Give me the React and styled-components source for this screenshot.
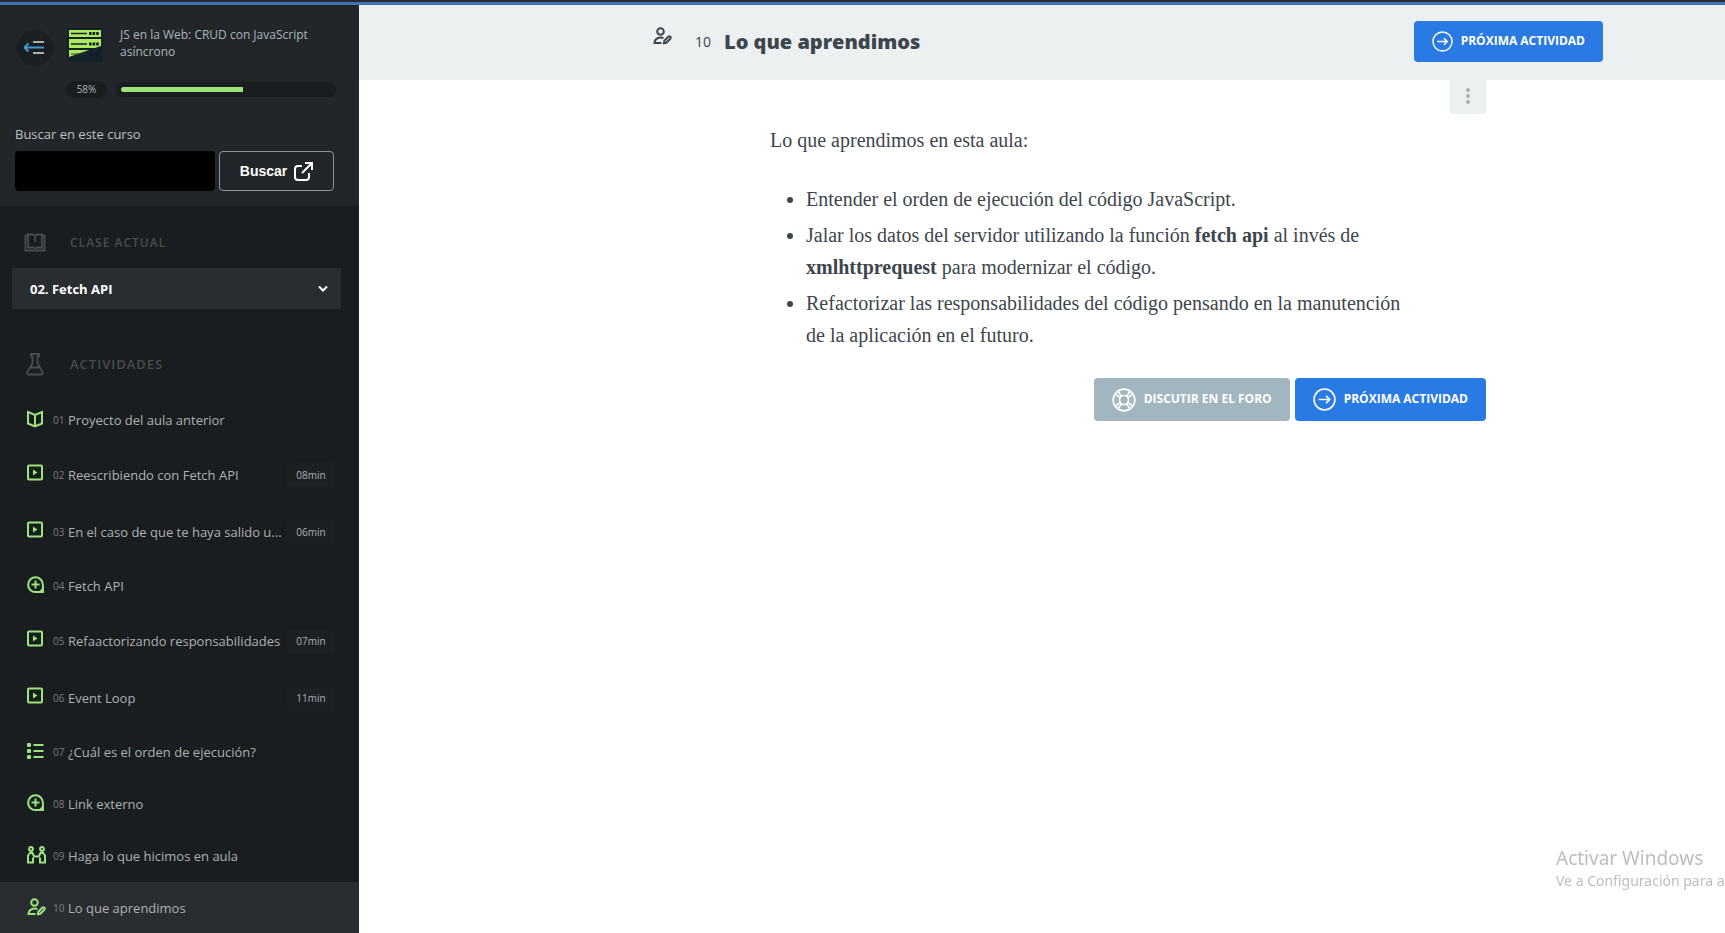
import React from "react";
import styled, { createGlobalStyle } from "styled-components";

const GlobalStyle = createGlobalStyle`
  *, *::before, *::after { box-sizing: border-box; }
  html, body { margin: 0; }
  body {
    background: #ffffff;
    color: #3d464d;
    font-family: "Open Sans", "Noto Sans", sans-serif;
    font-size: 13px;
  }
  button, input, select { font-family: inherit; }
`;

const Page = styled.div`
  display: flex;
  flex-direction: column;
  height: 100vh;
  overflow: hidden;
`;

const TopStrip = styled.div`
  flex: none;
  height: 5px;
  background: #4072b5;
  border-top: 2px solid #262b2f;
`;

const Columns = styled.div`
  display: flex;
  flex: 1;
  min-height: 0;
`;

/* Sidebar */

const Sidebar = styled.aside`
  flex: none;
  width: 359px;
  overflow: hidden;
  background: #191d1f;
`;

const CourseHeader = styled.header`
  height: 201px;
  padding: 20px 23px 0 15px;
  background: #22262a;
`;

const CourseTop = styled.div`
  display: flex;
  align-items: flex-start;
`;

const CollapseButton = styled.button`
  display: grid;
  place-items: center;
  width: 36px;
  height: 36px;
  margin: 5px 14px 0 2px;
  padding: 0;
  border: 0;
  border-radius: 50%;
  background: #1b1f22;
`;

const CourseName = styled.a`
  margin-left: 17px;
  color: #a9b6bb;
  font-size: 12px;
  line-height: 17px;
  text-decoration: none;
  max-width: 210px;
  padding-top: 1px;
`;

const LogoBox = styled.span`
  display: block;
  height: 34px;
  margin-top: 3px;
`;

const ProgressRow = styled.div`
  display: flex;
  align-items: center;
  gap: 9px;
  margin: 15px 0 0 51px;
`;

const Percent = styled.span`
  width: 41px;
  border-radius: 9px;
  background: #191d1f;
  color: #a9b6bb;
  font-size: 10px;
  line-height: 17px;
  text-align: center;
`;

const Track = styled.div`
  flex: 1;
  height: 15px;
  padding: 5px;
  border-radius: 8px;
  background: #191d1f;
`;

const Fill = styled.div`
  height: 5px;
  border-radius: 3px 0 0 3px;
  background: #9be37d;
`;

const SearchForm = styled.form`
  margin-top: 26px;
`;

const SearchLabel = styled.label`
  display: block;
  color: #bcc0c2;
  font-size: 13px;
  line-height: 20px;
`;

const SearchRow = styled.div`
  display: flex;
  gap: 4px;
  margin-top: 7px;
`;

const SearchInput = styled.input`
  width: 200px;
  height: 40px;
  padding: 0 12px;
  border: 0;
  border-radius: 4px;
  background: #000000;
  color: #ffffff;
  font-size: 14px;
`;

const SearchButton = styled.button`
  display: flex;
  align-items: center;
  justify-content: center;
  gap: 7px;
  width: 115px;
  height: 40px;
  padding: 0;
  border: 1px solid #909497;
  border-radius: 4px;
  background: transparent;
  color: #ffffff;
  font-family: "Liberation Sans", Arial, sans-serif;
  font-size: 14px;
  font-weight: 700;
`;

const SectionTitle = styled.h2`
  display: flex;
  align-items: center;
  height: 24px;
  margin: 0;
  padding-left: 24px;
  gap: 24px;
  color: #484d50;
  font-size: ${(p) => (p.$small ? 12 : 13)}px;
  font-weight: 600;
  letter-spacing: 1px;
`;

const ClassSection = styled.section`
  padding-top: 24px;
`;

const ActivitiesSection = styled.section`
  padding-top: 43px;
`;

const SelectWrap = styled.div`
  display: grid;
  align-items: center;
  margin: 14px 18px 0 12px;

  > * { grid-area: 1 / 1; }
  > svg { justify-self: end; margin-right: 11px; pointer-events: none; }
`;

const ClassSelect = styled.select`
  width: 100%;
  height: 41px;
  padding: 0 18px;
  appearance: none;
  border: 0;
  border-radius: 0;
  background: #292d30;
  color: #ffffff;
  font-size: 13px;
  font-weight: 700;
`;

const ActivityList = styled.ol`
  margin: 18px 0 0;
  padding: 0;
  list-style: none;
`;

const Activity = styled.li`
  background: ${(p) => (p.$active ? "#292d30" : "transparent")};
`;

const ActivityLink = styled.a`
  display: flex;
  align-items: center;
  height: ${(p) => (p.$timed ? 57 : 52)}px;
  padding: 0 24px 0 27px;
  color: #adb1b3;
  font-size: 13px;
  text-decoration: none;
`;

const ActivityIcon = styled.span`
  display: flex;
  width: 26px;
  padding-bottom: 3px;
`;

const Order = styled.span`
  width: 15px;
  color: #797e80;
  font-size: 10px;
`;

const ActivityName = styled.span`
  white-space: nowrap;
`;

const Duration = styled.span`
  width: 48px;
  margin-left: auto;
  border-radius: 2px;
  background: #1c2023;
  font-size: 10px;
  line-height: 24px;
  text-align: center;
`;

/* Main area */

const Main = styled.main`
  flex: 1;
  min-width: 0;
`;

const TitleBar = styled.header`
  height: 75px;
  padding-left: 172px;
  background: #ecf0f1;
`;

const TitleInner = styled.div`
  display: flex;
  align-items: center;
  max-width: 950px;
  margin: 0 auto;
  padding-top: 16px;
`;

const TitleIcon = styled.span`
  display: flex;
  margin: 0 23px 11px 0;
`;

const TitleNumber = styled.span`
  width: 29px;
  font-size: 14px;
`;

const Title = styled.h1`
  margin: 0;
  font-size: 20px;
  font-weight: 800;
  line-height: 40px;
`;

const ActionLink = styled.a`
  display: flex;
  align-items: center;
  gap: 8px;
  height: ${(p) => (p.$tall ? 43 : 41)}px;
  padding: 0 18px;
  border-radius: 4px;
  background: ${(p) => (p.$muted ? "#a2b6bf" : "#2a7ae4")};
  color: #ffffff;
  font-size: 12px;
  font-weight: 700;
  line-height: 16px;
  text-decoration: none;
  white-space: nowrap;
`;

const ActionText = styled.span`
  padding-bottom: 2px;
`;

const TitleAction = styled.div`
  margin-left: auto;
`;

const ContentArea = styled.div`
  padding-left: 172px;
`;

const Content = styled.article`
  max-width: 716px;
  margin: 0 auto;
  color: #3d464d;
  font-family: "Source Serif Pro", "Liberation Serif", serif;
  font-size: 20px;
  line-height: 32px;
`;

const MoreButton = styled.button`
  display: grid;
  place-items: center;
  width: 36px;
  height: 34px;
  margin-left: auto;
  padding: 0;
  border: 0;
  border-radius: 0 0 3px 3px;
  background: #ecf0f1;
`;

const Intro = styled.p`
  margin: 10px 0 27px;
`;

const Lessons = styled.ul`
  margin: 0;
  padding: 0 80px 0 36px;

  li + li { margin-top: 4px; }
`;

const Actions = styled.div`
  display: flex;
  justify-content: flex-end;
  gap: 5px;
  margin-top: 27px;
  font-family: "Open Sans", "Noto Sans", sans-serif;
`;

const Watermark = styled.div`
  position: fixed;
  right: 0;
  bottom: 41px;
  width: 169px;
  overflow: hidden;
  color: #bdbdbd;
  font-family: "Noto Sans", "Open Sans", sans-serif;
  white-space: nowrap;
  pointer-events: none;
`;

const WatermarkTitle = styled.div`
  font-size: 19px;
  line-height: 24px;
`;

const WatermarkText = styled.div`
  font-size: 14px;
  line-height: 22px;
`;

/* Icons */

const GREEN = "#9be37d";

const CollapseIcon = () => (
  <svg width="22" height="16" viewBox="0 0 22 16" fill="none" strokeWidth="2">
    <path d="M9 2h11M9 13h11" stroke="#a9b0b4" />
    <path d="M1 7.500h19M4.500 3.500l-4 4 4 4" stroke="#3f97cf" />
  </svg>
);

const CourseLogo = () => (
  <svg width="36" height="34" viewBox="0 0 36 34">
    <rect x="0" y="0" width="36" height="34" rx="2" fill="#14202b" />
    <path d="M2 2h32v7H2zM2 11h32v7L28 20H2zM2 22h20L2 29z" fill="#aee85c" />
    <path d="M4 5.500h16M4 16h16" stroke="#14202b" strokeWidth="1.500" />
    <path d="M4 26h16" stroke="#26331f" />
    <path d="M22 5.500h10M22 16h10" stroke="#14202b" strokeWidth="3" strokeDasharray="2.600 1" />
    <path d="M22 26.500h10" stroke="#0d151d" strokeWidth="2" strokeDasharray="2.600 1" />
  </svg>
);

const ExternalIcon = () => (
  <svg width="19" height="19" viewBox="0 0 19 19" fill="none" stroke="currentColor" strokeWidth="2">
    <path d="M8 4H4a3 3 0 0 0-3 3v8a3 3 0 0 0 3 3h8a3 3 0 0 0 3-3v-4M11 1h7v7M18 1L8 11" />
  </svg>
);

const BookIcon = () => (
  <svg width="22" height="19" viewBox="0 0 22 19" fill="none" stroke="currentColor" strokeWidth="1.800">
    <path d="M4 2.500H1.500v15h19v-15H18" />
    <path d="M4 14.500v-13h5l2 1.500 2-1.500h5v13h-5l-2 1-2-1zM11 3v6" />
  </svg>
);

const FlaskIcon = () => (
  <svg width="22" height="24" viewBox="0 0 22 24" fill="none" stroke="currentColor" strokeWidth="1.800">
    <path d="M7 1.800h8v2.500h-1.500v7l5 8.500c.7 1.500 0 2.700-1.500 2.700H5c-1.500 0-2.200-1.200-1.500-2.700l5-8.500v-7H7zM6 15.500h10" />
  </svg>
);

const ChevronIcon = () => (
  <svg width="14" height="10" viewBox="0 0 14 10" fill="none" stroke="#ffffff" strokeWidth="2">
    <path d="M3 2.500l4 4 4-4" />
  </svg>
);

const IconBase = ({ children }) => (
  <svg width="19" height="18" viewBox="0 0 19 18" fill="none" stroke={GREEN} strokeWidth="2">
    {children}
  </svg>
);

const PersonEditShapes = () => (
  <>
    <circle cx="7.500" cy="4.500" r="3.300" />
    <path d="M10.500 10.900C5 9.800 1.500 12 1.500 16h7" />
    <path d="M11 16.300l.3-2.600 4-4c1.400-1.200 3.300.5 2 2l-4 4.100z" />
  </>
);

const activityIcons = {
  reading: (
    <IconBase>
      <path d="M1 2l7 3 7-3v11.500l-7 3-7-3zM8 5v11" />
    </IconBase>
  ),
  video: (
    <IconBase>
      <rect x="1" y="1.500" width="14" height="14" rx="1" />
      <path d="M6 5.500v6l4.500-3z" fill={GREEN} stroke="none" />
    </IconBase>
  ),
  extra: (
    <IconBase>
      <path d="M8.500 1.300a7.300 7.300 0 1 0 0 14.800h7.400V8.700A7.400 7.400 0 0 0 8.500 1.300zM8.500 4.500v8M4.500 8.500h8" />
      <path d="M16.500 11v6h-6z" fill={GREEN} stroke="none" />
    </IconBase>
  ),
  quiz: (
    <IconBase>
      <path d="M6.500 3h10M6.500 9h10M6.500 15h10" />
      <rect x="0" y="1" width="4" height="4" rx="1" fill={GREEN} stroke="none" />
      <rect x="0" y="7" width="4" height="4" rx="1" fill={GREEN} stroke="none" />
      <rect x="0" y="13" width="4" height="4" rx="1" fill={GREEN} stroke="none" />
    </IconBase>
  ),
  together: (
    <IconBase>
      <circle cx="4" cy="3" r="1.900" />
      <circle cx="15" cy="3" r="1.900" />
      <path d="M9.500 10.500H7.200L5.500 7H3L1 9.500v7h5v-5M9.500 10.500h2.300L13.500 7H16l2 2.500v7h-5v-5" />
    </IconBase>
  ),
  summary: (
    <IconBase>
      <PersonEditShapes />
    </IconBase>
  ),
};

const ArrowCircleIcon = ({ size }) => (
  <svg width={size} height={size} viewBox="0 0 22 22" fill="none" stroke="currentColor" strokeWidth="1.500">
    <circle cx="11" cy="11" r="10" />
    <path d="M5.500 11h10.500M12.500 7.500L16 11l-3.500 3.500" />
  </svg>
);

const LifebuoyIcon = () => (
  <svg width="24" height="24" viewBox="0 0 24 24" fill="none" stroke="currentColor" strokeWidth="1.700">
    <circle cx="12" cy="12" r="10.800" />
    <circle cx="12" cy="12" r="4.500" />
    <path d="M8 9.500L3.500 6M9.500 8L6 3.500M14.500 8L18 3.500M16 9.500L20.500 6M8 14.500L3.500 18M9.500 16L6 20.500M14.500 16l3.500 4.500M16 14.500l4.500 3.500" />
  </svg>
);

const MoreIcon = () => (
  <svg width="4" height="18" viewBox="0 0 4 18" fill="#a5adb1">
    <circle cx="2" cy="2" r="2" />
    <circle cx="2" cy="8" r="2" />
    <circle cx="2" cy="14" r="2" />
  </svg>
);

const activities = [
  { icon: "reading", name: "Proyecto del aula anterior" },
  { icon: "video", name: "Reescribiendo con Fetch API", time: "08min" },
  { icon: "video", name: "En el caso de que te haya salido u...", time: "06min" },
  { icon: "extra", name: "Fetch API" },
  { icon: "video", name: "Refaactorizando responsabilidades", time: "07min" },
  { icon: "video", name: "Event Loop", time: "11min" },
  { icon: "quiz", name: "¿Cuál es el orden de ejecución?" },
  { icon: "extra", name: "Link externo" },
  { icon: "together", name: "Haga lo que hicimos en aula" },
  { icon: "summary", name: "Lo que aprendimos", active: true },
];

const progress = 58;

export default function App() {
  return (
    <Page>
      <GlobalStyle />
      <TopStrip />
      <Columns>
        <Sidebar>
          <CourseHeader>
            <CourseTop>
              <CollapseButton type="button" aria-label="Ocultar menú">
                <CollapseIcon />
              </CollapseButton>
              <LogoBox>
                <CourseLogo />
              </LogoBox>
              <CourseName href="#curso">JS en la Web: CRUD con JavaScript asíncrono</CourseName>
            </CourseTop>
            <ProgressRow>
              <Percent>{progress}%</Percent>
              <Track>
                <Fill style={{ width: `${progress}%` }} />
              </Track>
            </ProgressRow>
            <SearchForm>
              <SearchLabel htmlFor="search">Buscar en este curso</SearchLabel>
              <SearchRow>
                <SearchInput id="search" type="text" />
                <SearchButton type="button">
                  Buscar
                  <ExternalIcon />
                </SearchButton>
              </SearchRow>
            </SearchForm>
          </CourseHeader>
          <ClassSection>
            <SectionTitle id="class-title" $small>
              <BookIcon />
              CLASE ACTUAL
            </SectionTitle>
            <SelectWrap>
              <ClassSelect aria-labelledby="class-title" defaultValue="02">
                <option value="02">02. Fetch API</option>
              </ClassSelect>
              <ChevronIcon />
            </SelectWrap>
          </ClassSection>
          <ActivitiesSection>
            <SectionTitle>
              <FlaskIcon />
              ACTIVIDADES
            </SectionTitle>
            <ActivityList>
              {activities.map((a, i) => {
                const order = String(i + 1).padStart(2, "0");
                return (
                  <Activity key={order} $active={a.active}>
                    <ActivityLink href={`#actividad-${order}`} $timed={Boolean(a.time)}>
                      <ActivityIcon>{activityIcons[a.icon]}</ActivityIcon>
                      <Order>{order}</Order>
                      <ActivityName>{a.name}</ActivityName>
                      {a.time && <Duration>{a.time}</Duration>}
                    </ActivityLink>
                  </Activity>
                );
              })}
            </ActivityList>
          </ActivitiesSection>
        </Sidebar>
        <Main>
          <TitleBar>
            <TitleInner>
              <TitleIcon>
                <svg width="19" height="18" viewBox="0 0 19 18" fill="none" stroke="#3d464d" strokeWidth="2">
                  <PersonEditShapes />
                </svg>
              </TitleIcon>
              <TitleNumber>10</TitleNumber>
              <Title>Lo que aprendimos</Title>
              <TitleAction>
                <ActionLink href="#siguiente">
                  <ArrowCircleIcon size={21} />
                  <ActionText>PRÓXIMA ACTIVIDAD</ActionText>
                </ActionLink>
              </TitleAction>
            </TitleInner>
          </TitleBar>
          <ContentArea>
            <Content>
              <MoreButton type="button" aria-label="Más opciones">
                <MoreIcon />
              </MoreButton>
              <Intro>Lo que aprendimos en esta aula:</Intro>
              <Lessons>
                <li>Entender el orden de ejecución del código JavaScript.</li>
                <li>
                  Jalar los datos del servidor utilizando la función <strong>fetch api</strong> al invés de{" "}
                  <strong>xmlhttprequest</strong> para modernizar el código.
                </li>
                <li>
                  Refactorizar las responsabilidades del código pensando en la manutención de la aplicación en el
                  futuro.
                </li>
              </Lessons>
              <Actions>
                <ActionLink href="#foro" $muted $tall>
                  <LifebuoyIcon />
                  <ActionText>DISCUTIR EN EL FORO</ActionText>
                </ActionLink>
                <ActionLink href="#siguiente" $tall>
                  <ArrowCircleIcon size={23} />
                  <ActionText>PRÓXIMA ACTIVIDAD</ActionText>
                </ActionLink>
              </Actions>
            </Content>
          </ContentArea>
        </Main>
      </Columns>
      <Watermark>
        <WatermarkTitle>Activar Windows</WatermarkTitle>
        <WatermarkText>Ve a Configuración para activar Windows.</WatermarkText>
      </Watermark>
    </Page>
  );
}
